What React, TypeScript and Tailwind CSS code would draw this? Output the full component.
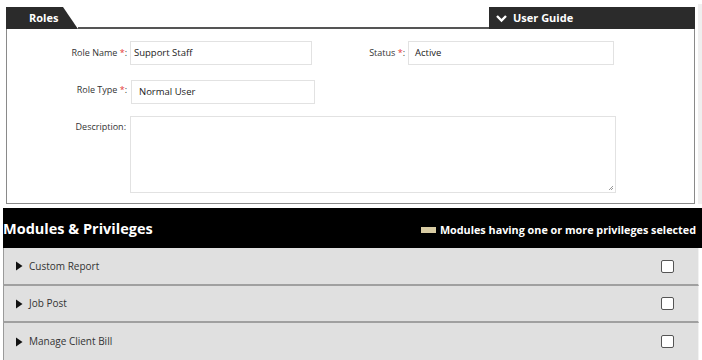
import React from "react";

const modules = ["Custom Report", "Job Post", "Manage Client Bill"];

const Req = () => <span className="text-[#e53935]">*</span>;

const App: React.FC = () => {
  return (
    <div className="w-[702px] h-[360px] overflow-hidden bg-white font-['Open_Sans',sans-serif] text-[#333]">
      {/* role form */}
      <div className="flex">
        <div className="w-[695px] pl-[6px] pt-[7px]">
          <div className="flex h-[22px]">
            <div
              className="w-[72px] bg-[#2b2b2b] text-white text-[11px] font-bold pl-[23px] leading-[22px]"
              style={{ clipPath: "polygon(0 0, 57px 0, 100% 100%, 0 100%)" }}
            >
              Roles
            </div>
            <div className="flex-1 border-b-2 border-[#555]" />
            <div className="w-[206px] bg-[#2b2b2b] text-white text-[11px] font-bold flex items-center pl-[7px] gap-[6px]">
              <svg width="11" height="9" viewBox="0 0 11 9">
                <path d="M1 2 L5.5 6.5 L10 2" fill="none" stroke="white" strokeWidth="2.4" />
              </svg>
              User Guide
            </div>
          </div>
          <div className="h-[175px] border-x border-b border-[#8a8a8a] pt-[12px] text-[9px]">
            <div className="flex items-center h-[24px]">
              <label className="w-[123px] text-right pr-[3px]">
                Role Name <Req />:
              </label>
              <div className="w-[182px] h-[24px] border border-[#e2e2e2] pl-[3px] flex items-center text-[9.5px] text-[#222]">
                Support Staff
              </div>
              <label className="w-[96px] text-right pr-[3px]">
                Status <Req />:
              </label>
              <div className="w-[206px] h-[24px] border border-[#e2e2e2] pl-[6px] flex items-center text-[9.5px] text-[#222]">
                Active
              </div>
            </div>
            <div className="flex items-start h-[24px] mt-[15px]">
              <label className="w-[124px] text-right pr-[4px] pt-[3px]">
                Role Type <Req />:
              </label>
              <div className="w-[184px] h-[24px] border border-[#e2e2e2] pl-[7px] flex items-center text-[9.5px] text-[#222]">
                Normal User
              </div>
            </div>
            <div className="flex items-start mt-[12px]">
              <label className="w-[123px] text-right pr-[4px] pt-[4px]">Description:</label>
              <div className="relative w-[486px] h-[77px] border border-[#e2e2e2]">
                <svg className="absolute right-[1px] bottom-[1px]" width="6" height="6" viewBox="0 0 6 6">
                  <path d="M5 1 L1 5 M5 3 L3 5" stroke="#999" strokeWidth="1" />
                </svg>
              </div>
            </div>
          </div>
        </div>
        <div className="w-[3px]" />
        <div className="w-[4px] h-[200px] bg-[#efefef] mt-[4px]" />
      </div>

      {/* modules & privileges */}
      <div className="ml-[3px] mt-[4px]">
        <div className="h-[40px] bg-black flex items-center justify-between pr-[6px]">
          <span className="text-white font-bold text-[14.5px] pt-[1px]">Modules &amp; Privileges</span>
          <span className="flex items-center gap-[4px] text-white font-bold text-[10.8px] pt-[4px]">
            <span className="w-[15px] h-[6px] bg-[#d8cba3]" />
            Modules having one or more privileges selected
          </span>
        </div>
        {modules.map((m, i) => (
          <div
            key={m}
            className={`w-[696px] flex items-center justify-between bg-[#e0e0e0] border-l border-[#9a9a9a] border-r border-r-[#f2f2f2] ${
              i === 0 ? "h-[38px]" : "h-[37px]"
            } ${i < modules.length - 1 ? "border-b-2 border-b-[#a0a0a0]" : ""}`}
          >
            <div className="flex items-center pl-[11px] gap-[6px] text-[10px] text-[#333]">
              <svg width="8" height="10" viewBox="0 0 8 10">
                <path d="M1 0.5 L7.5 5 L1 9.5 Z" fill="#111" />
              </svg>
              {m}
            </div>
            <div className="w-[13px] h-[13px] mr-[24px] bg-white border border-[#555] rounded-[2px]" />
          </div>
        ))}
      </div>
    </div>
  );
};

export default App;
